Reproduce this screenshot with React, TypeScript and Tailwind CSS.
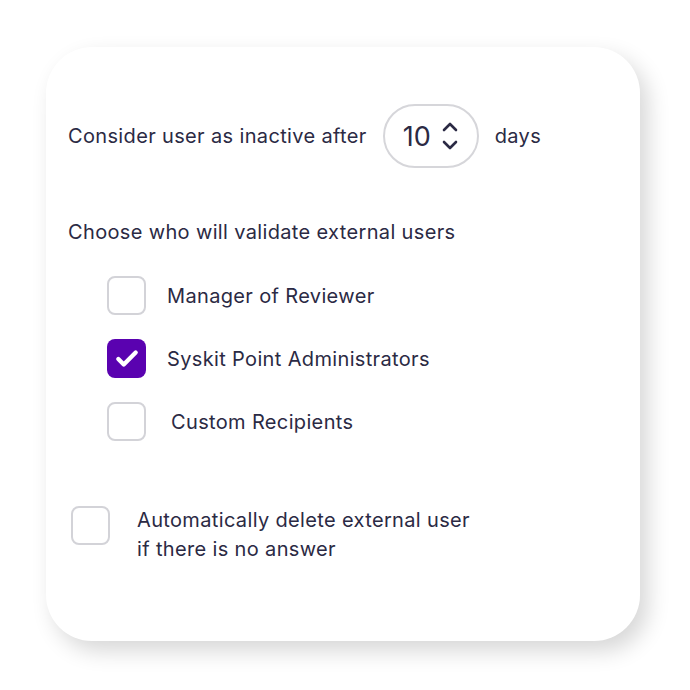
import { Check } from 'lucide-react';

function Box({ checked }: { checked?: boolean }) {
    if (checked) {
        return (
            <span className="flex h-[39px] w-[39px] shrink-0 items-center justify-center rounded-[8px] bg-[#5a02b0]">
                <Check className="h-[26px] w-[26px] text-white" strokeWidth={4} />
            </span>
        );
    }
    return <span className="block h-[39px] w-[39px] shrink-0 rounded-[8px] border-2 border-[#d3d3d8] bg-white" />;
}

function Chevrons() {
    return (
        <svg width="20" height="32" viewBox="0 0 20 32" fill="none" stroke="#2b2a44" strokeWidth="2.6" strokeLinecap="round" strokeLinejoin="round">
            <path d="M4 10 L10 4 L16 10" />
            <path d="M4 22 L10 28 L16 22" />
        </svg>
    );
}

export default function App() {
    const options = [
        { label: 'Manager of Reviewer', checked: false, pad: 'pl-[21px]' },
        { label: 'Syskit Point Administrators', checked: true, pad: 'pl-[21px]' },
        { label: 'Custom Recipients', checked: false, pad: 'pl-[25px]' },
    ];

    return (
        <div className="h-[690px] w-[690px] bg-white pl-[46px] pt-[47px] font-['Inter',sans-serif] tracking-[0.35px] text-[#2b2a44]">
            <div className="h-[594px] w-[594px] rounded-[46px] bg-white pl-[22px] pt-[57px] shadow-[8px_10px_22px_rgba(0,0,0,0.16)]">
                <div className="flex items-center text-[20px]">
                    <span>Consider user as inactive after</span>
                    <div className="ml-[16px] flex h-[64px] w-[96px] items-center rounded-full border-2 border-[#d6d6da] pl-[18px]">
                        <span className="text-[27px] leading-none tracking-normal">10</span>
                        <span className="ml-[9px] flex items-center">
                            <Chevrons />
                        </span>
                    </div>
                    <span className="ml-[16px]">days</span>
                </div>

                <p className="mt-[50px] text-[20px] leading-[28px]">Choose who will validate external users</p>

                <div className="mt-[30px] flex flex-col gap-[24px] pl-[39px]">
                    {options.map(opt => (
                        <div key={opt.label} className="flex items-center">
                            <Box checked={opt.checked} />
                            <span className={`text-[20px] ${opt.pad}`}>{opt.label}</span>
                        </div>
                    ))}
                </div>

                <div className="mt-[65px] flex items-start pl-[3px]">
                    <Box />
                    <p className="pl-[27px] text-[20px] leading-[29px]">
                        Automatically delete external user
                        <br />
                        if there is no answer
                    </p>
                </div>
            </div>
        </div>
    );
}
